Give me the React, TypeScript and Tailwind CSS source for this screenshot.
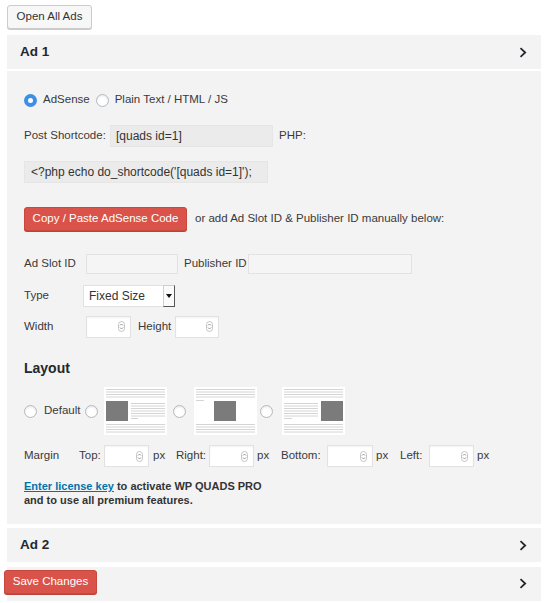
import React from 'react';

const FONT = "font-['Liberation_Sans',Arial,sans-serif]";

function Chevron() {
  return (
    <svg width="8" height="11" viewBox="0 0 8 11" className="shrink-0">
      <path d="M1.5 1.2 L6.2 5.5 L1.5 9.8" fill="none" stroke="#23282d" strokeWidth="1.8" />
    </svg>
  );
}

function Radio({ checked = false, className = '' }: { checked?: boolean; className?: string }) {
  if (checked) {
    return (
      <span className={`flex h-[13px] w-[13px] shrink-0 items-center justify-center rounded-full bg-[#3d8ee4] ${className}`}>
        <span className="h-[5px] w-[5px] rounded-full bg-white" />
      </span>
    );
  }
  return (
    <span
      className={`h-[13px] w-[13px] shrink-0 rounded-full border border-[#b4b9be] bg-white shadow-[inset_0_1px_2px_rgba(0,0,0,0.1)] ${className}`}
    />
  );
}

function Spinner() {
  return (
    <svg width="7" height="11" viewBox="0 0 7 11">
      <rect x="0.5" y="0.5" width="6" height="10" rx="3" fill="none" stroke="#c4c4c4" />
      <path d="M2 4.5 L3.5 3 L5 4.5 M2 6.5 L3.5 8 L5 6.5" fill="none" stroke="#888" strokeWidth="0.9" />
    </svg>
  );
}

function NumberInput({ width }: { width: string }) {
  return (
    <div
      className={`flex h-[22px] ${width} shrink-0 items-center justify-end border border-[#e2e2e2] bg-white pr-[5px] shadow-[inset_0_1px_2px_rgba(0,0,0,0.05)]`}
    >
      <Spinner />
    </div>
  );
}

function Lines({ ys, x1 = 2, x2 = 61 }: { ys: number[]; x1?: number; x2?: number }) {
  return (
    <>
      {ys.map((y) => (
        <line key={`${x1}-${y}`} x1={x1} x2={x2} y1={y} y2={y} stroke="#d4d4d4" strokeWidth="1" />
      ))}
    </>
  );
}

function LayoutPic({ align }: { align: 'left' | 'center' | 'right' }) {
  const top = [2.5, 5, 7.5, 10];
  const bottom = [37.5, 40, 42.5, 45];
  const mid = [16.5, 19, 21.5, 24, 26.5, 29];
  return (
    <svg width="63" height="48" viewBox="0 0 63 48" className="shrink-0">
      <rect width="63" height="48" fill="#fff" />
      <Lines ys={top} />
      {align === 'left' && (
        <>
          <rect x="2" y="14" width="22" height="20" fill="#7b7b7b" />
          <Lines ys={mid} x1={27} x2={61} />
          <line x1="27" x2="34" y1="31.5" y2="31.5" stroke="#d4d4d4" />
        </>
      )}
      {align === 'center' && (
        <>
          <line x1="2" x2="10" y1="13.5" y2="13.5" stroke="#d4d4d4" />
          <rect x="20" y="14" width="22" height="20" fill="#7b7b7b" />
        </>
      )}
      {align === 'right' && (
        <>
          <rect x="39" y="14" width="22" height="20" fill="#7b7b7b" />
          <Lines ys={mid} x1={2} x2={36} />
          <line x1="2" x2="10" y1="31.5" y2="31.5" stroke="#d4d4d4" />
        </>
      )}
      <Lines ys={bottom} />
    </svg>
  );
}

function Header({ title, className = '' }: { title: string; className?: string }) {
  return (
    <div className={`flex h-[34px] items-center justify-between bg-[#f3f3f3] pl-[13px] pr-[14px] ${className}`}>
      <span className="text-[13.5px] font-bold text-[#23282d]">{title}</span>
      <Chevron />
    </div>
  );
}

export default function App() {
  return (
    <div className={`${FONT} min-h-[603px] w-[550px] bg-white pl-[7px] pt-[5px] text-[11.5px] text-[#3a3a3a]`}>
      <div className="w-[534px]">
        <button className="h-[24px] w-[85px] rounded-[3px] border border-[#cccccc] bg-[#f7f7f7] text-[11.5px] text-[#333] shadow-[0_1px_0_#cccccc]">
          Open All Ads
        </button>

        <Header title="Ad 1" className="mt-[6px]" />

        <div className="mt-[2px] bg-[#f3f3f3] pb-[17px] pl-[17px] pt-[22px]">
          <div className="flex h-[14px] items-center">
            <Radio checked />
            <span className="ml-[6px]">AdSense</span>
            <Radio className="ml-[6px]" />
            <span className="ml-[6px]">Plain Text / HTML / JS</span>
          </div>

          <div className="mt-[18px] flex h-[22px] items-center">
            <span className="w-[86px]">Post Shortcode:</span>
            <div className="flex h-[22px] w-[163px] items-center border border-[#e6e6e6] bg-[#ebebeb] pl-[5px] text-[12px] text-[#333]">
              [quads id=1]
            </div>
            <span className="ml-[6px]">PHP:</span>
          </div>

          <div className="mt-[14px] flex h-[22px] w-[244px] items-center border border-[#e6e6e6] bg-[#ebebeb] pl-[6px] text-[12px] text-[#333]">
            &lt;?php echo do_shortcode('[quads id=1]');
          </div>

          <div className="mt-[24px] flex h-[24px] items-center">
            <button className="h-[24px] w-[163px] rounded-[3px] border border-[#c9483d] bg-[#d9534a] text-[11.5px] text-white shadow-[0_1px_0_#b8433a]">
              Copy / Paste AdSense Code
            </button>
            <span className="ml-[8px]">or add Ad Slot ID &amp; Publisher ID manually below:</span>
          </div>

          <div className="mt-[23px] flex h-[20px] items-center">
            <span className="w-[62px]">Ad Slot ID</span>
            <div className="h-[20px] w-[92px] border border-[#e2e2e2] bg-[#f5f5f5]" />
            <span className="ml-[6px] w-[64px]">Publisher ID</span>
            <div className="h-[20px] w-[164px] border border-[#e2e2e2] bg-[#f5f5f5]" />
          </div>

          <div className="mt-[11px] flex h-[22px] items-center">
            <span className="w-[59px]">Type</span>
            <div className="flex h-[22px] w-[92px] items-stretch bg-white">
              <span className="flex flex-1 items-center border border-r-0 border-[#e2e2e2] pl-[5px] text-[12px] text-[#333]">
                Fixed Size
              </span>
              <span className="flex w-[12px] items-center justify-center border border-[#cfcfcf] border-b-[#555] border-r-[#555] bg-[#fafafa]">
                <svg width="6" height="4" viewBox="0 0 6 4">
                  <path d="M0 0 H6 L3 4 Z" fill="#111" />
                </svg>
              </span>
            </div>
          </div>

          <div className="mt-[9px] flex h-[21px] items-center">
            <span className="w-[62px]">Width</span>
            <NumberInput width="w-[45px]" />
            <span className="ml-[7px] w-[37px]">Height</span>
            <NumberInput width="w-[44px]" />
          </div>

          <div className="mt-[23px] h-[17px] text-[14px] font-bold leading-[17px] text-[#23282d]">Layout</div>

          <div className="mt-[10px] flex h-[48px] items-center">
            <Radio />
            <span className="ml-[7px]">Default</span>
            <Radio className="ml-[5px]" />
            <span className="ml-[6px]">
              <LayoutPic align="left" />
            </span>
            <Radio className="ml-[6px]" />
            <span className="ml-[8px]">
              <LayoutPic align="center" />
            </span>
            <Radio className="ml-[3px]" />
            <span className="ml-[9px]">
              <LayoutPic align="right" />
            </span>
          </div>

          <div className="mt-[10px] flex h-[22px] items-center">
            <span className="w-[55px]">Margin</span>
            <span className="w-[25px]">Top:</span>
            <NumberInput width="w-[45px]" />
            <span className="w-[27px] pl-[4px]">px</span>
            <span className="w-[33px]">Right:</span>
            <NumberInput width="w-[45px]" />
            <span className="w-[27px] pl-[3px]">px</span>
            <span className="w-[46px]">Bottom:</span>
            <NumberInput width="w-[46px]" />
            <span className="w-[27px] pl-[3px]">px</span>
            <span className="w-[29px]">Left:</span>
            <NumberInput width="w-[45px]" />
            <span className="pl-[3px]">px</span>
          </div>

          <div className="mt-[12px] text-[11px] font-bold leading-[14px] text-[#333]">
            <a className="text-[#0073aa] underline">Enter license key</a> to activate WP QUADS PRO
            <br />
            and to use all premium features.
          </div>
        </div>

        <Header title="Ad 2" className="mt-[4px] h-[33px]" />

        <div className="mt-[5px] flex h-[34px] items-start justify-between bg-[#f3f3f3] pr-[14px] pt-[3px]">
          <button className="-ml-[3px] h-[24px] w-[93px] rounded-[3px] border border-[#c9483d] bg-[#d9534a] text-[11.5px] text-white shadow-[0_1px_0_#b8433a]">
            Save Changes
          </button>
          <span className="mt-[8px]">
            <Chevron />
          </span>
        </div>
      </div>
    </div>
  );
}
